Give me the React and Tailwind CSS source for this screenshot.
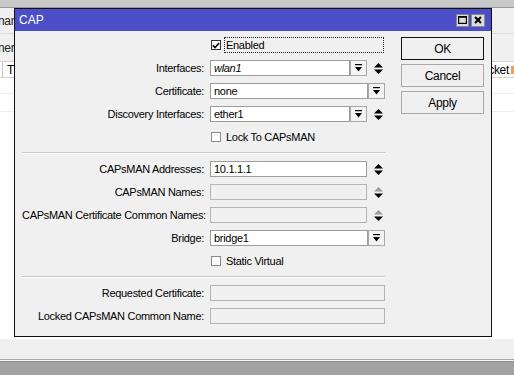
import React from "react";

function DropIcon() {
  return (
    <svg width="7" height="8" viewBox="0 0 7 8">
      <rect x="0" y="0" width="7" height="1.2" fill="#000" />
      <path d="M0 3h7L3.5 7.5z" fill="#000" />
    </svg>
  );
}

function SpinIcon({ upDisabled }) {
  return (
    <svg width="9" height="11" viewBox="0 0 9 11">
      <path d="M0 4.5L4.5 0L9 4.5z" fill={upDisabled ? "#9a9a9a" : "#000"} />
      <path d="M0 6.5h9L4.5 11z" fill="#000" />
    </svg>
  );
}

function DropButton() {
  return (
    <div className="w-[17px] h-[16px] border border-[#a8a8a8] bg-[#f4f4f4] flex items-center justify-center shrink-0">
      <DropIcon />
    </div>
  );
}

function Spinner({ upDisabled }) {
  return (
    <div className="w-[18px] h-[16px] flex items-center justify-end pr-[2px] shrink-0">
      <SpinIcon upDisabled={upDisabled} />
    </div>
  );
}

function Field({ value, italic, disabled, drop, spin, upDisabled }) {
  return (
    <div className="flex h-[16px]">
      <div
        className={`flex-1 h-[16px] border flex items-center pl-[3px] ${
          disabled ? "bg-[#f0f0f0] border-[#b4b4b4]" : "bg-white border-[#9c9c9c]"
        } ${italic ? "italic" : ""}`}
      >
        {value}
      </div>
      {drop && <DropButton />}
      {spin && <Spinner upDisabled={upDisabled} />}
    </div>
  );
}

function Check({ checked }) {
  return (
    <div className={`w-[10px] h-[10px] ml-[1px] bg-white border flex items-center justify-center shrink-0 ${checked ? "border-[#333]" : "border-[#8a8a8a]"}`}>
      {checked && (
        <svg width="8" height="7" viewBox="0 0 8 7">
          <path d="M0.8 3.4L3 5.6L7.2 1" stroke="#000" strokeWidth="1.6" fill="none" />
        </svg>
      )}
    </div>
  );
}

function Row({ label, children }) {
  return (
    <div className="grid grid-cols-[183px_175px] gap-x-[5px] h-[16px] items-center">
      <div className="text-right pr-[1px] whitespace-nowrap">{label}</div>
      <div>{children}</div>
    </div>
  );
}

function Separator() {
  return (
    <div>
      <div className="h-px bg-[#c8c8c8]" />
      <div className="h-px bg-white" />
    </div>
  );
}

function Btn({ children, primary }) {
  return (
    <div
      className={`h-[23px] flex items-center justify-center bg-[#f0f0f0] text-[12px] ${
        primary ? "border-[1.5px] border-[#111]" : "border border-[#a8a8a8]"
      }`}
    >
      {children}
    </div>
  );
}

export default function App() {
  return (
    <div
      className="relative w-[514px] h-[375px] overflow-hidden bg-white text-[11px] tracking-[-0.3px] text-black"
      style={{ fontFamily: '"Liberation Sans", Arial, sans-serif' }}
    >
      {/* background app */}
      <div className="flex flex-col h-full">
        <div className="h-[8px] bg-[#c9c9c9] border-b border-[#9a9a9a]" />
        <div className="h-[26px] bg-[#f0f0f0] flex items-center border-b border-[#dcdcdc]">
          <span className="-ml-[2px] text-[12px] text-[#222]">nan</span>
        </div>
        <div className="h-[27px] bg-[#f0f0f0] flex items-center">
          <span className="-ml-[2px] text-[12px] text-[#222]">ner</span>
        </div>
        <div className="h-[17px] bg-white border-y border-[#d4d4d4] flex items-center justify-between text-[12px]">
          <div className="flex h-full items-center">
            <div className="w-[3px] h-full border-r border-[#c8c8c8]" />
            <span className="pl-[4px]">Tx</span>
          </div>
          <div className="flex items-center gap-[2px]">
            <span>cket</span>
            <span className="w-[3px] h-[8px] bg-[#f0a040]" />
          </div>
        </div>
        <div className="h-[16px] border-b border-[#ececec]" />
        <div className="h-[18px] border-b border-[#ececec]" />
        <div className="flex-1 bg-white" />
        <div className="h-[21px] bg-[#f0f0f0] border-b border-[#a8a8a8]" />
        <div className="h-[2px] bg-[#f7f7f7] border-b border-[#8c8c8c]" />
        <div className="h-[13px] bg-[#a2a2a2]" />
      </div>

      {/* CAP window */}
      <div className="absolute left-[14px] top-[8px] w-[478px] h-[329px] border border-[#111] bg-[#f0f0f0] flex flex-col">
        <div className="h-[22px] bg-[#4b4ec6] flex items-center justify-between pl-[4px] pr-[6px]">
          <span className="text-white text-[12px] tracking-normal">CAP</span>
          <div className="flex gap-[2px]">
            <div className="w-[13px] h-[13px] bg-[#dcdcdc] border border-[#8a8a8a] flex items-center justify-center">
              <svg width="9" height="8" viewBox="0 0 9 8">
                <rect x="0.6" y="0.8" width="7.8" height="6.6" fill="none" stroke="#000" strokeWidth="1.2" />
                <rect x="0" y="0" width="9" height="1.6" fill="#000" />
              </svg>
            </div>
            <div className="w-[14px] h-[13px] bg-[#dcdcdc] border border-[#8a8a8a] flex items-center justify-center">
              <svg width="8" height="8" viewBox="0 0 8 8">
                <path d="M1 1L7 7M7 1L1 7" stroke="#000" strokeWidth="2" />
              </svg>
            </div>
          </div>
        </div>

        <div className="flex pt-[6px] pl-[7px]">
          <div className="flex flex-col gap-[7px] w-[363px]">
            <Row label="">
              <div className="flex items-center h-[16px]">
                <Check checked />
                <div className="flex-1 ml-[3px] mr-[1px] h-[16px] border border-dotted border-[#222] flex items-center pl-[1px]">
                  Enabled
                </div>
              </div>
            </Row>
            <Row label="Interfaces:">
              <Field value="wlan1" italic drop spin />
            </Row>
            <Row label="Certificate:">
              <Field value="none" drop />
            </Row>
            <Row label="Discovery Interfaces:">
              <Field value="ether1" drop spin />
            </Row>
            <Row label="">
              <div className="flex items-center gap-[5px]">
                <Check />
                <span>Lock To CAPsMAN</span>
              </div>
            </Row>
            <Separator />
            <Row label="CAPsMAN Addresses:">
              <Field value="10.1.1.1" spin />
            </Row>
            <Row label="CAPsMAN Names:">
              <Field value="" disabled spin upDisabled />
            </Row>
            <Row label="CAPsMAN Certificate Common Names:">
              <Field value="" disabled spin upDisabled />
            </Row>
            <Row label="Bridge:">
              <Field value="bridge1" drop />
            </Row>
            <Row label="">
              <div className="flex items-center gap-[5px]">
                <Check />
                <span>Static Virtual</span>
              </div>
            </Row>
            <Separator />
            <Row label="Requested Certificate:">
              <Field value="" disabled />
            </Row>
            <Row label="Locked CAPsMAN Common Name:">
              <Field value="" disabled />
            </Row>
          </div>

          <div className="ml-[16px] w-[83px] flex flex-col gap-[4px]">
            <Btn primary>OK</Btn>
            <Btn>Cancel</Btn>
            <Btn>Apply</Btn>
          </div>
        </div>
      </div>
    </div>
  );
}
